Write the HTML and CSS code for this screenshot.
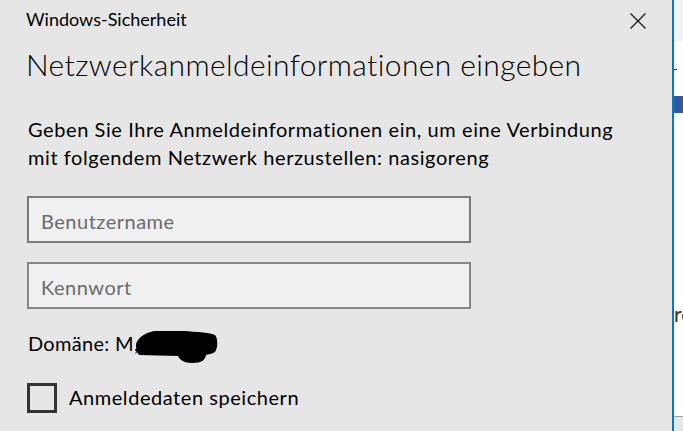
FILE: index.html
```html
<!DOCTYPE html>
<html lang="de">
<head>
<meta charset="utf-8">
<title>Windows-Sicherheit</title>
<link rel="stylesheet" href="styles.css">
</head>
<body>
<div class="screen">
  <div class="dialog">
    <div class="titlebar">
      <span class="app-title">Windows-Sicherheit</span>
      <svg class="close" width="16" height="16" viewBox="0 0 16 16" aria-label="Schließen">
        <path d="M0.5 0.5 L15.5 15.5 M15.5 0.5 L0.5 15.5" stroke="#1a1a1a" stroke-width="1.3" fill="none"/>
      </svg>
    </div>
    <h1 class="heading">Netzwerkanmeldeinformationen eingeben</h1>
    <p class="intro">Geben Sie Ihre Anmeldeinformationen ein, um eine Verbindung<br>mit folgendem Netzwerk herzustellen: nasigoreng</p>
    <div class="field field-user"><span class="placeholder">Benutzername</span></div>
    <div class="field field-pass"><span class="placeholder">Kennwort</span></div>
    <div class="domain">Domäne: M,
      <svg class="redact" width="82" height="34" viewBox="0 0 82 34">
        <path d="M0,14 C2,8 8,3 18,1 L48,1 C60,2 72,2 79,5 C82,8 82,18 79,22 C76,24 72,24 70,25 C69,30 66,33 56,33 C48,33 44,30 42,26 L4,25 C1,24 0,20 0,14 Z" fill="#000"/>
      </svg>
    </div>
    <div class="remember">
      <span class="checkbox"></span>
      <span class="remember-label">Anmeldedaten speichern</span>
    </div>
  </div>
  <div class="accent"></div>
  <div class="backwin">
    <div class="bw-band"></div>
    <div class="bw-dash"></div>
    <div class="bw-bar"></div>
    <div class="bw-text">ro</div>
    <div class="bw-line"></div>
    <div class="bw-foot"></div>
  </div>
</div>
</body>
</html>
```
FILE: styles.css
```css
html, body {
  margin: 0;
  padding: 0;
}
body {
  width: 683px;
  height: 431px;
  overflow: hidden;
  font-family: "Lato", "Open Sans", "Liberation Sans", sans-serif;
  color: #000;
}
.screen {
  display: flex;
  width: 683px;
  height: 431px;
}
.dialog {
  width: 672px;
  height: 431px;
  background: #e6e6e6;
  box-sizing: border-box;
  padding: 7px 0 0 26px;
}
.titlebar {
  display: flex;
  justify-content: space-between;
  align-items: flex-start;
  height: 24px;
  padding-right: 26px;
}
.app-title {
  font-size: 18px;
  line-height: 24px;
}
.close {
  display: block;
  margin-top: 6px;
}
.heading {
  margin: 13px 0 0 0;
  font-size: 30px;
  line-height: 40px;
  font-weight: 300;
  letter-spacing: 0.38px;
}
.intro {
  margin: 31px 0 0 2px;
  font-size: 20px;
  line-height: 28px;
  letter-spacing: 0.58px;
}
.field {
  box-sizing: border-box;
  width: 444px;
  height: 47px;
  margin-left: 1px;
  border: 2px solid #7a7a7a;
  background: #f0f0f0;
  padding: 3px 0 0 12px;
  font-size: 20px;
  line-height: 40px;
  letter-spacing: 0.5px;
}
.field-user {
  margin-top: 25px;
}
.field-pass {
  margin-top: 19px;
  border-color: #878787;
}
.placeholder {
  color: #6b6b6b;
}
.domain {
  position: relative;
  margin: 20px 0 0 2px;
  font-size: 20px;
  line-height: 28px;
  letter-spacing: 0.3px;
}
.redact {
  position: absolute;
  left: 108px;
  top: 1px;
}
.remember {
  display: flex;
  align-items: flex-start;
  margin: 26px 0 0 1px;
}
.checkbox {
  box-sizing: border-box;
  width: 30px;
  height: 30px;
  border: 3px solid #333;
}
.remember-label {
  margin-left: 12px;
  font-size: 20px;
  line-height: 28px;
  letter-spacing: 0.55px;
}
.accent {
  width: 2px;
  height: 431px;
  background: #0078d7;
}
.backwin {
  width: 9px;
  height: 431px;
  background: #fff;
  display: flex;
  flex-direction: column;
  overflow: hidden;
}
.bw-band {
  height: 41px;
  background: #f2f2f2;
}
.bw-dash {
  margin-top: 28px;
  width: 3px;
  height: 1px;
  background: #333;
}
.bw-bar {
  margin-top: 26px;
  height: 17px;
  background: #2c5c9e;
}
.bw-text {
  margin-top: 189px;
  font-size: 21px;
  line-height: 24px;
  color: #3a2a10;
  white-space: nowrap;
}
.bw-line {
  margin-top: 90px;
  height: 1px;
  background: #a0a0a0;
}
.bw-foot {
  flex: 1;
  background: #e6e6e6;
}
```
